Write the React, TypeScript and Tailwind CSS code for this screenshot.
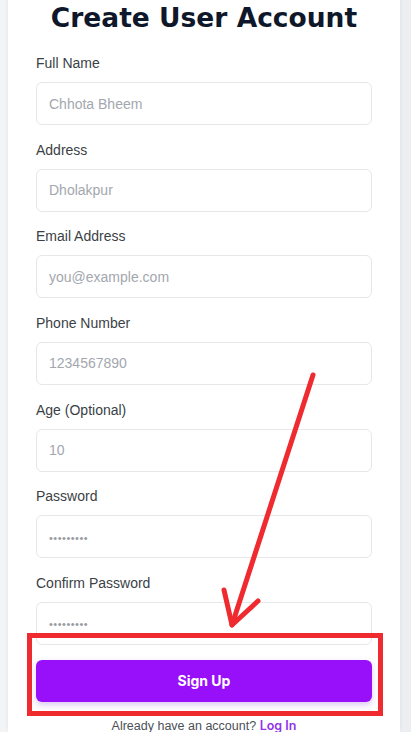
import React from "react";

const fields = [
  { label: "Full Name", placeholder: "Chhota Bheem", type: "text" },
  { label: "Address", placeholder: "Dholakpur", type: "text" },
  { label: "Email Address", placeholder: "you@example.com", type: "email" },
  { label: "Phone Number", placeholder: "1234567890", type: "tel" },
  { label: "Age (Optional)", placeholder: "10", type: "text" },
  { label: "Password", placeholder: "•••••••••", type: "password" },
  { label: "Confirm Password", placeholder: "•••••••••", type: "password" },
];

const Field = ({ label, placeholder, type }: { label: string; placeholder: string; type: string }) => {
  const isSecret = type === "password";
  return (
    <div className="flex flex-col">
      <label className="text-sm leading-5 text-[#3b3f46] mb-[9px]">{label}</label>
      <input
        type={isSecret ? "text" : type}
        readOnly
        placeholder={placeholder}
        className={
          isSecret
            ? "h-[43px] w-full rounded-md border border-[#e6e7ea] bg-white px-3 text-sm outline-none placeholder:text-[#979ba2] placeholder:text-[11px] placeholder:tracking-[0.5px]"
            : "h-[43px] w-full rounded-md border border-[#e6e7ea] bg-white px-3 text-sm outline-none placeholder:text-[#a3a7ae]"
        }
      />
    </div>
  );
};

const App = () => {
  return (
    <div className="relative h-[732px] w-[411px] overflow-hidden bg-[#eceef1] font-['Liberation_Sans',Arial,sans-serif]">
      <div className="flex h-full pl-[8px] pr-[11px] bg-[linear-gradient(to_right,#f3f4f6_0px,#f3f4f6_8px,#eceef1_8px)]">
        <div className="flex-1 bg-white px-7 pt-[2px] shadow-[0_-2px_4px_rgba(0,0,0,0.08)]">
          <h1 className="text-center font-['DejaVu_Sans',sans-serif] text-[26.5px] font-bold leading-8 text-[#0f172a]">
            Create User Account
          </h1>

          {/* Form fields */}
          <form className="mt-[19px] flex flex-col gap-[14.67px]">
            {fields.map((f) => (
              <Field key={f.label} {...f} />
            ))}
          </form>

          <button
            type="button"
            className="mt-[15px] h-[42px] w-full rounded-md bg-[#9810fa] font-['Inter',sans-serif] text-sm font-bold text-white shadow-[0_3px_6px_rgba(120,40,200,0.25)]"
          >
            Sign Up
          </button>

          <p className="mt-[16px] text-center text-[12.5px] leading-4 text-[#4b5058]">
            Already have an account?{" "}
            <span className="font-['Inter',sans-serif] font-semibold text-[#9333ea]">Log In</span>
          </p>
        </div>
      </div>

      {/* Red annotation: box around the button */}
      <div className="pointer-events-none absolute left-[27px] top-[633px] h-[83px] w-[356px] border-[5px] border-[#ef2b30]" />

      {/* Red annotation: arrow */}
      <svg
        className="pointer-events-none absolute left-0 top-0"
        width="411"
        height="732"
        viewBox="0 0 411 732"
        fill="none"
      >
        <g stroke="#ef2b30" strokeWidth="5" strokeLinecap="round" strokeLinejoin="round">
          <path d="M313 375 L232 625" />
          <path d="M224 590 L232 625 L258 601" />
        </g>
      </svg>
    </div>
  );
};

export default App;
